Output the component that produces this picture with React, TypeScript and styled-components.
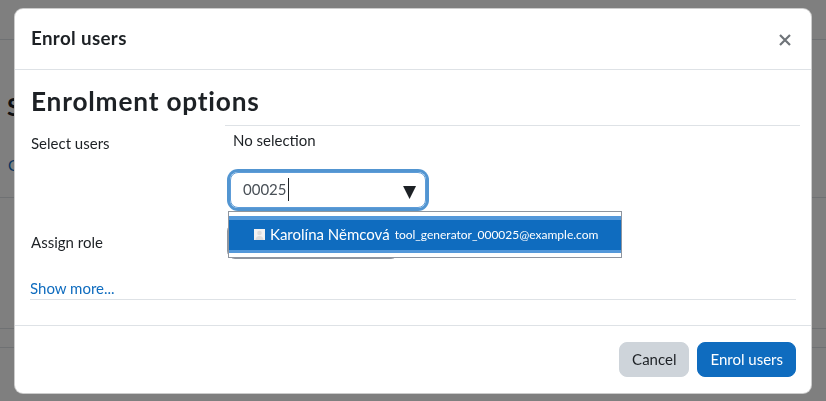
import React from "react";
import styled, { createGlobalStyle } from "styled-components";

const Global = createGlobalStyle`
  html, body { margin: 0; padding: 0; background: #fff; }
  body { font-family: Lato, "Liberation Sans", sans-serif; color: #1d2125; font-size: 15px; line-height: 1.5; }
  * { box-sizing: border-box; }
`;

/* ---------- background page ---------- */
const Page = styled.div`
  width: 826px;
  height: 401px;
  overflow: hidden;
`;
const Navbar = styled.div`
  height: 40px;
  border-bottom: 1px solid #dee2e6;
`;
const PageHeader = styled.div`
  padding: 51px 0 0 7px;
  height: 158px;
  border-bottom: 1px solid #dee2e6;
`;
const PageTitle = styled.h1`
  margin: 0;
  font-size: 25px;
  line-height: 30px;
  font-weight: 700;
  color: #1d2125;
`;
const PageLink = styled.a`
  display: block;
  margin-top: 33px;
  padding-left: 1px;
  color: #0f6cbf;
  font-size: 15px;
  text-decoration: none;
`;
const TableHead = styled.div`
  margin-top: 130px;
  height: 20px;
  border-top: 1px solid #dee2e6;
  border-bottom: 1px solid #dee2e6;
`;

const Backdrop = styled.div`
  position: fixed;
  inset: 0;
  background: rgba(0, 0, 0, 0.5);
`;

/* ---------- modal ---------- */
const Modal = styled.div`
  position: fixed;
  top: 8px;
  left: 14px;
  width: 798px;
  background: #fff;
  border: 1px solid rgba(0, 0, 0, 0.2);
  border-radius: 9px;
  display: flex;
  flex-direction: column;
`;
const Header = styled.div`
  height: 61px;
  padding: 0 16px;
  border-bottom: 1px solid #dee2e6;
  display: flex;
  align-items: center;
  justify-content: space-between;
`;
const Title = styled.h5`
  margin: 0;
  font-size: 18.75px;
  letter-spacing: 0.35px;
  font-weight: 700;
  line-height: 1.2;
  padding-bottom: 2px;
`;
const CloseButton = styled.button`
  border: 0;
  background: transparent;
  padding: 0;
  margin: 2px 3px 0 0;
  width: 14px;
  height: 14px;
  display: flex;
  align-items: center;
  justify-content: center;
  cursor: pointer;
`;
const Body = styled.div`
  padding: 16px 16px 24px;
`;
const Heading = styled.h3`
  margin: 0;
  font-size: 26.25px;
  letter-spacing: 0.8px;
  font-weight: 700;
  line-height: 30px;
`;
const HeadingRule = styled.hr`
  margin: 9px -5px 0 194px;
  border: 0;
  border-top: 1px solid #dee2e6;
`;
const FormRow = styled.div<{ $mt: number }>`
  display: grid;
  grid-template-columns: 197px 1fr;
  margin-top: ${(p) => p.$mt}px;
`;
const Label = styled.label<{ $pt: number }>`
  padding-top: ${(p) => p.$pt}px;
`;
const Field = styled.div`
  position: relative;
`;
const Selection = styled.div`
  padding-left: 5px;
`;
const InputWrap = styled.div`
  position: relative;
  margin-top: 20px;
  margin-left: 2px;
  width: 196px;
`;
const Input = styled.div`
  height: 36px;
  border: 1px solid #5d9cd8;
  border-radius: 8px;
  box-shadow: 0 0 0 3px rgba(15, 108, 191, 0.72);
  padding: 6px 12px;
  color: #495057;
  display: flex;
  align-items: center;
`;
const Caret = styled.span`
  display: inline-block;
  width: 1px;
  height: 23px;
  background: #1d2125;
  margin-left: 1px;
`;
const DownArrow = styled.span`
  position: absolute;
  right: 10px;
  top: 7px;
  font-size: 17px;
  color: #1d2125;
  font-family: "DejaVu Sans", sans-serif;
`;
const Suggestions = styled.ul`
  position: absolute;
  z-index: 2;
  left: -2px;
  top: 39px;
  width: 394px;
  margin: 0;
  padding: 4px 0;
  list-style: none;
  background: #fff;
  border: 1px solid #8f959e;
`;
const Suggestion = styled.li`
  height: 37px;
  background: #0f6cbf;
  border-top: 4px solid #5398da;
  border-bottom: 3px solid #5398da;
  color: #fff;
  display: flex;
  align-items: center;
  padding-left: 25px;
  gap: 5px;
  white-space: nowrap;
`;
const Name = styled.span`
  font-size: 15px;
`;
const Email = styled.span`
  font-size: 12px;
`;
const Select = styled.div`
  width: 172px;
  height: 36px;
  margin-left: -1px;
  border: 1px solid #8f959e;
  border-radius: 8px;
`;
const ShowMore = styled.a`
  display: block;
  margin-top: 18px;
  color: #0f6cbf;
  text-decoration: none;
  border-bottom: 1px solid #dee2e6;
  margin-left: -1px;
  width: 766px;
`;
const Footer = styled.div`
  border-top: 1px solid #dee2e6;
  margin-top: 1px;
  padding: 16px 15px 16px;
  display: flex;
  justify-content: flex-end;
  gap: 8px;
`;
const Button = styled.button<{ $primary?: boolean }>`
  font-family: inherit;
  font-size: 15px;
  line-height: 21px;
  padding: 6px 12px;
  border: 1px solid ${(p) => (p.$primary ? "#0f6cbf" : "#ced4da")};
  background: ${(p) => (p.$primary ? "#0f6cbf" : "#ced4da")};
  color: ${(p) => (p.$primary ? "#fff" : "#1d2125")};
  border-radius: 8px;
  cursor: pointer;
`;

const UserPic = () => (
  <svg width="11" height="11" viewBox="0 0 11 11">
    <rect width="11" height="11" fill="#f2f2f2" />
    <circle cx="5.5" cy="4" r="2.3" fill="#dcdcdc" />
    <path d="M1.5 11c0-2.6 1.8-4 4-4s4 1.4 4 4z" fill="#dcdcdc" />
  </svg>
);

export default function App() {
  return (
    <>
      <Global />
      <Page>
        <Navbar />
        <PageHeader>
          <PageTitle>S</PageTitle>
          <PageLink href="#">C</PageLink>
        </PageHeader>
        <TableHead />
      </Page>
      <Backdrop />
      <Modal role="dialog">
        <Header>
          <Title>Enrol users</Title>
          <CloseButton aria-label="Close">
            <svg width="12" height="12" viewBox="0 0 12 12">
              <path d="M1 1L11 11M11 1L1 11" stroke="#6f7479" strokeWidth="2.2" />
            </svg>
          </CloseButton>
        </Header>
        <Body>
          <Heading>Enrolment options</Heading>
          <HeadingRule />
          <FormRow $mt={3}>
            <Label $pt={3}>Select users</Label>
            <Field>
              <Selection>No selection</Selection>
              <InputWrap>
                <Input>
                  00025<Caret />
                </Input>
                <DownArrow>▼</DownArrow>
                <Suggestions role="listbox">
                  <Suggestion role="option" aria-selected="true">
                    <UserPic />
                    <Name>Karolína Němcová</Name>
                    <Email>tool_generator_000025@example.com</Email>
                  </Suggestion>
                </Suggestions>
              </InputWrap>
            </Field>
          </FormRow>
          <FormRow $mt={15}>
            <Label $pt={8}>Assign role</Label>
            <Field>
              <Select />
            </Field>
          </FormRow>
          <ShowMore href="#">Show more...</ShowMore>
        </Body>
        <Footer>
          <Button>Cancel</Button>
          <Button $primary>Enrol users</Button>
        </Footer>
      </Modal>
    </>
  );
}
